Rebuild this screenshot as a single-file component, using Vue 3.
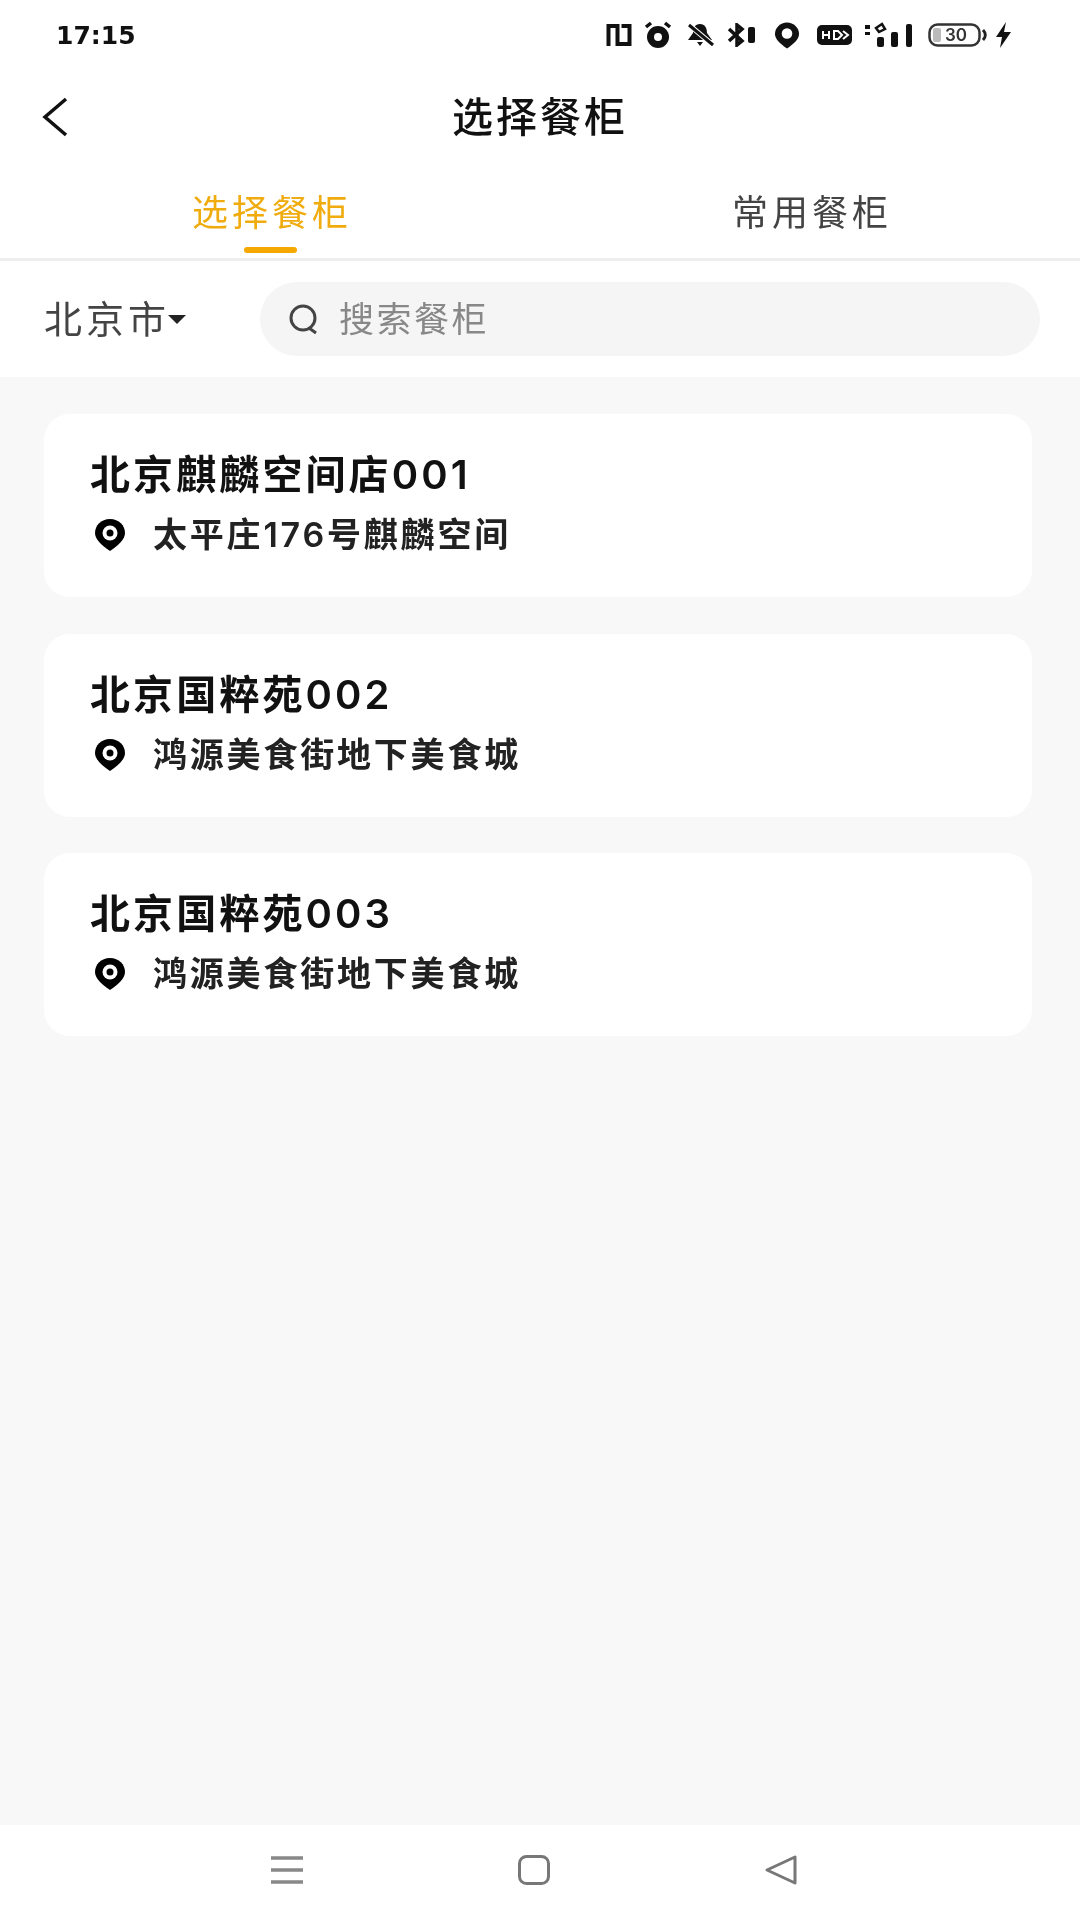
<script setup>
const cards = [
  { name: '北京麒麟空间店001', addr: '太平庄176号麒麟空间' },
  { name: '北京国粹苑002', addr: '鸿源美食街地下美食城' },
  { name: '北京国粹苑003', addr: '鸿源美食街地下美食城' },
]
</script>

<template>
  <div class="page">
    <div class="status">
      <span class="time">17:15</span>
      <div class="sicons">
        <svg width="26" height="24" viewBox="0 0 26 24" fill="none" stroke="#111" stroke-width="4"><path d="M2.500 23V3h9v18h12V3h-8"/></svg>
        <svg width="28" height="28" viewBox="0 0 28 28"><circle cx="14" cy="16" r="11" fill="#111"/><circle cx="14" cy="16" r="4" fill="#fff"/><path d="M2 6l5-4M26 6l-5-4" stroke="#111" stroke-width="3.500" fill="none"/></svg>
        <svg width="30" height="26" viewBox="0 0 30 26"><path d="M15 2c-5 0-7 4-7 9l-5 7h24l-5-7c0-5-2-9-7-9zM12 20h6l-3 4z" fill="#111"/><path d="M3 2l25 21" stroke="#fff" stroke-width="5"/><path d="M4 3l24 20" stroke="#111" stroke-width="3"/></svg>
        <svg width="30" height="24" viewBox="0 0 30 24" fill="none" stroke="#111" stroke-width="3.500"><path d="M2 6l13 12-5 4V2l5 4L2 18"/><rect x="21" y="4" width="7" height="16" rx="2" fill="#111" stroke="none"/></svg>
        <svg width="26" height="28" viewBox="0 0 27 28"><path d="M13.500 1C6.500 1 1 6.500 1 13c0 5 5 10 12.500 15C21 23 26 18 26 13 26 6.500 20.500 1 13.500 1z" fill="#111"/><circle cx="13.500" cy="12.500" r="5.500" fill="#fff"/></svg>
        <svg width="35" height="24" viewBox="0 0 35 24"><rect x="0" y="2" width="35" height="20" rx="5" fill="#111"/><path d="M6 8v8M12 8v8M6 12h6M17 8v8h4l4-4-4-4zM26 8l5 4-5 4" stroke="#fff" stroke-width="2" fill="none"/></svg>
        <svg width="52" height="26" viewBox="0 0 52 26" fill="#111"><rect x="0" y="3" width="5" height="4"/><rect x="0" y="10" width="5" height="3"/><path d="M11 6l6-4 3 5-6 3z" fill="none" stroke="#111" stroke-width="2.500"/><rect x="12" y="15" width="7" height="10" rx="2"/><rect x="26" y="10" width="7" height="15" rx="2"/><rect x="41" y="2" width="6" height="23" rx="2"/></svg>
        <svg width="60" height="26" viewBox="0 0 60 26"><rect x="1.500" y="2.500" width="50" height="21" rx="8" fill="none" stroke="#333" stroke-width="2.500"/><rect x="5" y="6" width="8" height="14" rx="2" fill="#bbb"/><path d="M55 8c3 3 3 7 0 10" fill="none" stroke="#222" stroke-width="3"/><text x="28" y="19" text-anchor="middle" class="battnum">30</text></svg>
        <svg width="17" height="26" viewBox="0 0 17 26"><path d="M11 0L1 15h6l-2 11 11-16H9z" fill="#111"/></svg>
      </div>
    </div>

    <header class="head">
      <svg class="back" width="26" height="40" viewBox="0 0 26 40" fill="none" stroke="#111" stroke-width="3.500"><path d="M24 2L3 20l21 18"/></svg>
      <h1 class="title">选择餐柜</h1>
    </header>

    <div class="tabs">
      <div class="tab active">选择餐柜<i class="bar"></i></div>
      <div class="tab">常用餐柜</div>
    </div>

    <div class="filter">
      <div class="city"><span>北京市</span><i class="caret"></i></div>
      <div class="search">
        <svg width="32" height="32" viewBox="0 0 32 32" fill="none" stroke="#444" stroke-width="3"><circle cx="15" cy="15" r="12"/><path d="M21 25l7 5"/></svg>
        <span>搜索餐柜</span>
      </div>
    </div>

    <main class="list">
      <article v-for="c in cards" :key="c.name" class="card">
        <div class="name">{{ c.name }}</div>
        <div class="addr">
          <svg width="34" height="34" viewBox="0 0 34 34"><path d="M17 1C8 1 2 7.500 2 15c0 6 6 12 15 18 9-6 15-12 15-18C32 7.500 26 1 17 1z" fill="#000"/><circle cx="17" cy="15" r="7.500" fill="#fff"/><circle cx="17" cy="15" r="3.500" fill="#000"/></svg>
          <span>{{ c.addr }}</span>
        </div>
      </article>
    </main>

    <nav class="nav">
      <div class="navitem">
        <svg width="32" height="28" viewBox="0 0 32 28" fill="none" stroke="#888" stroke-width="3.500"><path d="M0 2h32M0 14h32M0 26h32"/></svg>
      </div>
      <div class="navitem">
        <svg width="32" height="30" viewBox="0 0 32 30" fill="none" stroke="#777" stroke-width="3"><rect x="1.500" y="1.500" width="29" height="27" rx="7"/></svg>
      </div>
      <div class="navitem">
        <svg width="32" height="30" viewBox="0 0 32 30" fill="none" stroke="#777" stroke-width="3" stroke-linejoin="round"><path d="M2 15L30 2v26z"/></svg>
      </div>
    </nav>
  </div>
</template>

<style>
html, body { margin: 0; background: #fff; }
</style>

<style scoped>
.page {
  width: 1080px;
  height: 1920px;
  display: flex;
  flex-direction: column;
  background: #fff;
  font-family: "Inter", "Noto Sans CJK SC", "Noto Sans", sans-serif;
  color: #111;
  overflow: hidden;
  filter: blur(0.6px);
}
.status {
  height: 70px;
  box-sizing: border-box;
  display: flex;
  align-items: center;
  justify-content: space-between;
  padding: 0 68px 0 56px;
}
.time {
  font-family: "DejaVu Sans", sans-serif;
  font-size: 25px;
  font-weight: 700;
  color: #111;
}
.sicons { display: flex; align-items: center; }
.sicons svg:nth-child(2) { margin-left: 12px; }
.sicons svg:nth-child(3) { margin-left: 13px; }
.sicons svg:nth-child(4) { margin-left: 12px; }
.sicons svg:nth-child(5) { margin-left: 17px; }
.sicons svg:nth-child(6) { margin-left: 17px; }
.sicons svg:nth-child(7) { margin-left: 13px; }
.sicons svg:nth-child(8) { margin-left: 11px; }
.sicons svg:nth-child(9) { margin-left: 7px; }
.battnum { font: 600 17px "Inter", sans-serif; fill: #333; }
.head {
  height: 94px;
  position: relative;
  display: flex;
  align-items: center;
  justify-content: center;
}
.back { position: absolute; left: 42px; top: 27px; }
.title { margin: 0; font-size: 41px; font-weight: 500; letter-spacing: 3px; line-height: 1; }
.tabs {
  height: 94px;
  display: flex;
  border-bottom: 3px solid #eee;
}
.tab {
  flex: 1;
  position: relative;
  text-align: center;
  text-indent: 4px;
  font-size: 36px;
  letter-spacing: 4px;
  line-height: 98px;
  color: #444;
}
.tab.active { color: #f0ac0e; }
.bar {
  position: absolute;
  left: 244px;
  bottom: 5px;
  width: 53px;
  height: 6px;
  border-radius: 3px;
  background: #f5a800;
}
.filter {
  height: 116px;
  display: flex;
  align-items: center;
  padding: 0 40px 0 44px;
}
.city {
  width: 216px;
  display: flex;
  align-items: center;
  font-size: 38px;
  letter-spacing: 4px;
  color: #444;
}
.city span { margin-top: -5px; }
.caret {
  width: 0;
  height: 0;
  margin-left: -2px;
  border-left: 9px solid transparent;
  border-right: 9px solid transparent;
  border-top: 9px solid #222;
}
.search {
  flex: 1;
  height: 74px;
  border-radius: 37px;
  background: #f5f5f5;
  display: flex;
  align-items: center;
  padding-left: 28px;
  gap: 19px;
  font-size: 35px;
  letter-spacing: 2.500px;
  color: #888;
}
.search span { margin-top: -6px; }
.list {
  flex: 1;
  background: #f8f8f8;
  display: flex;
  flex-direction: column;
  gap: 36.500px;
  padding: 37px 48px 0 44px;
}
.card {
  height: 183px;
  box-sizing: border-box;
  background: #fff;
  border-radius: 26px;
  padding: 36px 46px 0;
}
.name {
  font-size: 40px;
  font-weight: 600;
  line-height: 50px;
  letter-spacing: 3.100px;
  color: #111;
}
.addr {
  display: flex;
  align-items: center;
  gap: 26px;
  margin-top: 15px;
  padding-left: 3px;
  font-size: 34px;
  font-weight: 600;
  letter-spacing: 2.800px;
  line-height: 40px;
  color: #222;
}
.nav {
  height: 95px;
  background: #fff;
  display: flex;
  align-items: center;
  padding-left: 163px;
  padding-bottom: 6px;
  box-sizing: border-box;
}
.navitem { width: 247px; display: flex; justify-content: center; }
</style>
